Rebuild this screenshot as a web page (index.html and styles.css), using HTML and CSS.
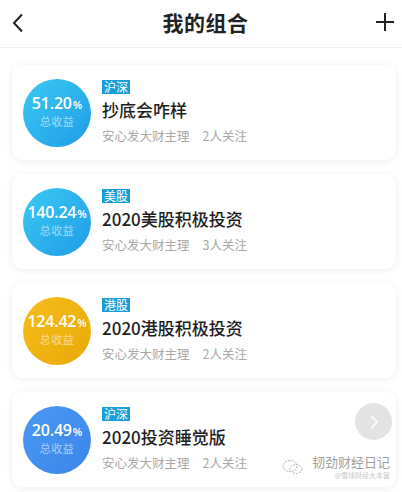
FILE: index.html
```html
<!DOCTYPE html>
<html lang="zh-CN">
<head>
    <meta charset="UTF-8">
    <title>我的组合</title>
    <link rel="stylesheet" href="styles.css">
</head>
<body>
    <div class="header">
        <svg class="back" width="12" height="20" viewBox="0 0 12 20"><path d="M10 1.5 L2 10 L10 18.5" fill="none" stroke="#222" stroke-width="2"/></svg>
        <div class="title">我的组合</div>
        <svg class="add" width="20" height="20" viewBox="0 0 20 20"><path d="M10 1 V19 M1 10 H19" fill="none" stroke="#222" stroke-width="2"/></svg>
    </div>
    <ul class="list">
        <li class="card">
            <div class="ring blue">
                <div class="num">51.20<span>%</span></div>
                <div class="lab">总收益</div>
            </div>
            <div class="info">
                <span class="tag">沪深</span>
                <div class="name">抄底会咋样</div>
                <div class="meta"><span>安心发大财主理</span><span>2人关注</span></div>
            </div>
        </li>
        <li class="card">
            <div class="ring blue">
                <div class="num">140.24<span>%</span></div>
                <div class="lab">总收益</div>
            </div>
            <div class="info">
                <span class="tag">美股</span>
                <div class="name">2020美股积极投资</div>
                <div class="meta"><span>安心发大财主理</span><span>3人关注</span></div>
            </div>
        </li>
        <li class="card">
            <div class="ring gold">
                <div class="num">124.42<span>%</span></div>
                <div class="lab">总收益</div>
            </div>
            <div class="info">
                <span class="tag">港股</span>
                <div class="name">2020港股积极投资</div>
                <div class="meta"><span>安心发大财主理</span><span>2人关注</span></div>
            </div>
        </li>
        <li class="card">
            <div class="ring deep">
                <div class="num">20.49<span>%</span></div>
                <div class="lab">总收益</div>
            </div>
            <div class="info">
                <span class="tag">沪深</span>
                <div class="name">2020投资睡觉版</div>
                <div class="meta"><span>安心发大财主理</span><span>2人关注</span></div>
            </div>
            <div class="more">
                <svg width="10" height="16" viewBox="0 0 10 16"><path d="M2 1.5 L8 8 L2 14.5" fill="none" stroke="#fff" stroke-width="1.5"/></svg>
            </div>
        </li>
    </ul>
    <div class="mark">
        <svg class="mark-icon" width="22" height="16" viewBox="0 0 22 16"><ellipse cx="8" cy="7" rx="7" ry="5.5" fill="none" stroke="#b5b5b5" stroke-width="1" stroke-dasharray="2 1"/><ellipse cx="14" cy="10" rx="6" ry="4.5" fill="none" stroke="#b5b5b5" stroke-width="1" stroke-dasharray="2 1"/></svg>
        <div class="mark-text">
            <span class="mark-main">韧劲财经日记</span>
            <span class="mark-sub">@雪球财经大本营</span>
        </div>
    </div>
</body>
</html>
```

FILE: styles.css
```css
*{
    margin: 0;
    padding: 0;
}
body{
    background: #fff;
    font-family: "Noto Sans CJK SC", "Noto Sans", sans-serif;
    width: 402px;
    height: 492px;
    overflow: hidden;
    position: relative;
}
.header{
    height: 47px;
    border-bottom: 1px solid #efefef;
    display: flex;
    align-items: center;
    justify-content: space-between;
    padding: 0 7px 0 12px;
}
.header .back{
    margin-top: -2px;
}
.header .title{
    font-size: 21px;
    font-weight: 700;
    color: #222;
    letter-spacing: 0.5px;
    margin-left: 12px;
    margin-top: -3px;
}
.header .add{
    margin-top: -4px;
}
.list{
    list-style: none;
    padding: 17px 6px 0 12px;
    display: flex;
    flex-direction: column;
    gap: 14px;
}
.card{
    position: relative;
    height: 95px;
    box-sizing: border-box;
    padding: 12px 11px;
    background: #fff;
    border-radius: 11px;
    box-shadow: 0 1px 8px rgba(0,0,0,0.07);
    display: flex;
    align-items: center;
}
.ring{
    width: 68px;
    height: 68px;
    border-radius: 50%;
    flex-shrink: 0;
    display: flex;
    flex-direction: column;
    align-items: center;
    justify-content: center;
    color: #fff;
    padding-bottom: 4px;
    box-sizing: border-box;
}
.ring.blue{
    background: linear-gradient(135deg, #3ccaf3, #1f9be7);
}
.ring.gold{
    background: linear-gradient(135deg, #f5bd1c, #e9a908);
}
.ring.deep{
    background: linear-gradient(135deg, #4b98f2, #3a86ea);
}
.ring .num{
    font-family: "Open Sans", sans-serif;
    font-size: 16px;
    font-weight: 600;
    line-height: 19px;
    white-space: nowrap;
    letter-spacing: -0.2px;
}
.ring .num span{
    font-size: 11px;
    margin-left: 1px;
}
.ring .lab{
    font-size: 11px;
    line-height: 14px;
    opacity: 0.55;
    letter-spacing: 0.5px;
}
.info{
    margin-left: 11px;
    display: flex;
    flex-direction: column;
    align-items: flex-start;
}
.tag{
    background: #1b9ed8;
    color: #fff;
    font-size: 12px;
    line-height: 14px;
    height: 14px;
    padding: 0 2px;
    margin-bottom: 4px;
}
.name{
    font-size: 17px;
    font-weight: 500;
    color: #1e1e1e;
    line-height: 24px;
}
.meta{
    margin-top: 5px;
    font-size: 12.5px;
    line-height: 18px;
    color: #a8a8a8;
    display: flex;
    gap: 13px;
}
.more{
    position: absolute;
    right: 4px;
    top: 11px;
    width: 37px;
    height: 37px;
    border-radius: 50%;
    background: #e3e3e3;
    display: flex;
    align-items: center;
    justify-content: center;
}
.mark{
    position: absolute;
    right: 12px;
    bottom: 12px;
    display: flex;
    align-items: center;
    gap: 8px;
}
.mark-text{
    display: flex;
    flex-direction: column;
    align-items: flex-end;
}
.mark-main{
    font-size: 13px;
    line-height: 16px;
    color: #8a8a8a;
    opacity: 0.8;
}
.mark-sub{
    font-size: 7px;
    line-height: 10px;
    color: #c8c8c8;
}
```
